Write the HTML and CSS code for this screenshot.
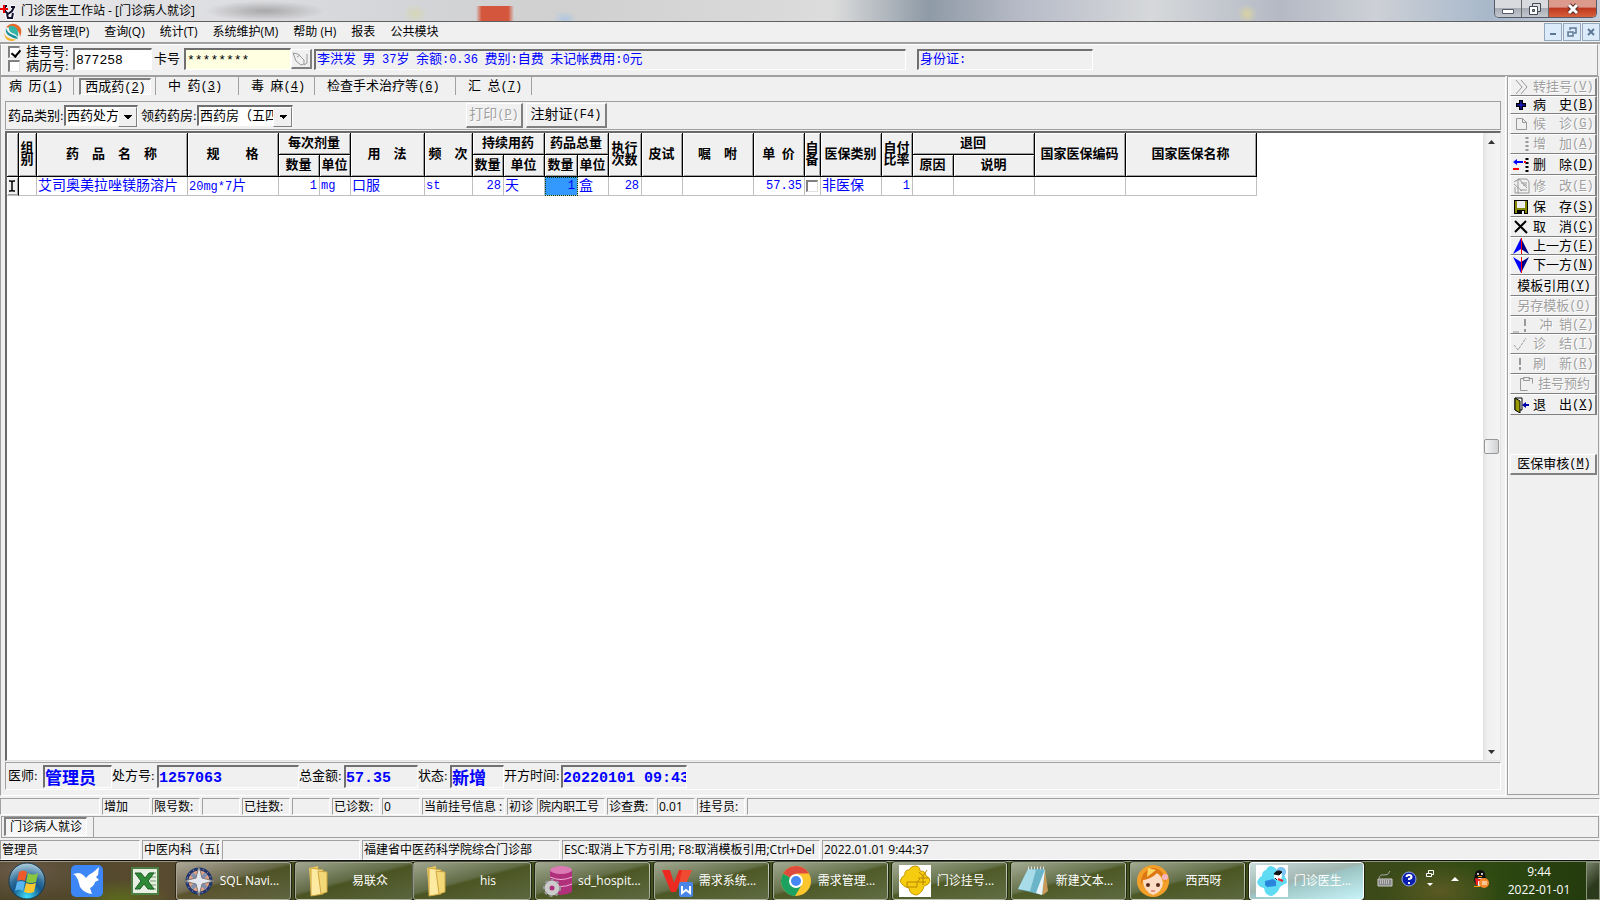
FILE: index.html
```html
<!DOCTYPE html>
<html lang="zh-CN">
<head>
    <meta charset="utf-8">
    <meta name="viewport" content="width=device-width, initial-scale=1">
    <title>门诊医生工作站</title>
    <link rel="stylesheet" href="styles.css">
</head>
<body>
    <header class="titlebar">
        <svg class="app-icon" width="17" height="18" viewBox="0 0 17 18">
            <path d="M5 4v5l3 3 4-3 2-4M7 12l1 4h4l1-5M5 4h2M11 5h4" fill="none" stroke="#fff" stroke-width="4"/>
            <path d="M5 4v5l3 3 4-3 2-4M7 12l1 4h4l1-5M5 4h2M11 5h4" fill="none" stroke="#101030" stroke-width="2"/>
            <path d="M0 7h8M4 3v8" stroke="#e00" stroke-width="2"/>
        </svg>
        <h1>门诊医生工作站 - [门诊病人就诊]</h1>
        <div class="window-buttons">
            <button aria-label="最小化"><svg width="14" height="14"><path d="M1.500 7.500h11v4h-11z" fill="#fff" stroke="#555a6a"/></svg></button>
            <button aria-label="还原"><svg width="14" height="14"><path d="M4.500 1.500h8v8h-8z" fill="#ddd" stroke="#444a5a"/><path d="M1.500 4.500h8v8h-8z" fill="#fff" stroke="#444a5a"/><path d="M4.500 7.500h2v2h-2z" fill="#999" stroke="#444a5a"/></svg></button>
            <button class="close" aria-label="关闭"><svg width="14" height="14"><path d="M3 3l8 8M11 3l-8 8" stroke="#5a2a2a" stroke-width="5"/><path d="M3 3l8 8M11 3l-8 8" stroke="#fff" stroke-width="3"/></svg></button>
        </div>
    </header>

    <nav class="menubar">
        <svg class="menu-logo" width="18" height="18" viewBox="0 0 18 18">
            <path d="M2 4q6-6 13-1 4 4 1 11 0-6-6-8-4-1-8-2z" fill="#e8672a"/>
            <path d="M2 5q1 5 7 7 4 1 5 4-6-1-10-4-3-3-2-7z" fill="#108f98"/>
            <path d="M5 3q5-1 8 3 2 4 1 8-2-3-6-4-4-2-3-7z" fill="#35b5a5"/>
            <path d="M0 8q0 5 5 7 4 2 7 1-1 2-4 2-5 0-7-4-1-3-1-6z" fill="#f5b32b"/>
        </svg>
        <button>业务管理(P)</button>
        <button>查询(Q)</button>
        <button>统计(T)</button>
        <button>系统维护(M)</button>
        <button>帮助 (H)</button>
        <button>报表</button>
        <button>公共模块</button>
        <div class="mdi-buttons">
            <button aria-label="最小化子窗口"><svg width="10" height="10"><path d="M2 7h6" stroke="#5d7896" stroke-width="2"/></svg></button>
            <button aria-label="还原子窗口"><svg width="10" height="10"><path d="M3 3V1h6v5H7M1 5h5v4H1z" fill="none" stroke="#5d7896" stroke-width="1.500"/></svg></button>
            <button aria-label="关闭子窗口"><svg width="10" height="10"><path d="M2 2l6 6M8 2l-6 6" stroke="#5d7896" stroke-width="2"/></svg></button>
        </div>
    </nav>

    <section class="patient">
        <div class="checks">
            <label><input type="checkbox" checked>挂号号:</label>
            <label><input type="checkbox">病历号:</label>
        </div>
        <input class="field reg-no" type="text" value="877258" aria-label="挂号号">
        <label class="card-label" for="card">卡号</label>
        <input class="field card-no" id="card" type="text" value="********">
        <button class="btn card-btn" aria-label="读卡" disabled><svg width="18" height="16"><path d="M1 2l5 1 6 6v4l-3 1-5-4zM5 6l3-2M15 3v9l-3 2" fill="none" stroke="#999"/></svg></button>
        <div class="sunken info">李洪发&ensp;男&ensp;<span class="num">37</span>岁&ensp;余额<span class="num">:0.36</span>&ensp;费别<span class="num">:</span>自费&ensp;未记帐费用<span class="num">:0</span>元</div>
        <div class="sunken idcard">身份证<span class="num">:</span></div>
    </section>

    <main>
        <div class="work">
            <div class="tabs">
                <button>病&ensp;历<span class="key">(<u>1</u>)</span></button>
                <button class="active"><span class="pressed">西成药<span class="key">(<u>2</u>)</span></span></button>
                <button>中&ensp;药<span class="key">(<u>3</u>)</span></button>
                <button>毒&ensp;麻<span class="key">(<u>4</u>)</span></button>
                <button>检查手术治疗等<span class="key">(<u>6</u>)</span></button>
                <button>汇&ensp;总<span class="key">(<u>7</u>)</span></button>
            </div>

            <div class="toolbar">
                <label for="kind">药品类别:</label>
                <span class="drop kind"><select id="kind"><option>西药处方</option></select></span>
                <label for="pharmacy">领药药房:</label>
                <span class="drop pharmacy"><select id="pharmacy"><option>西药房（五四）</option></select></span>
                <button class="btn print" disabled>打印<span class="key">(<u>P</u>)</span></button>
                <button class="btn inject">注射证<span class="key">(F4)</span></button>
            </div>

            <div class="grid">
                <div class="grid-body">
                    <table>
                        <colgroup>
                            <col class="w12"><col class="w18"><col class="w151"><col class="w91">
                            <col class="w41"><col class="w31"><col class="w74"><col class="w48">
                            <col class="w31"><col class="w41"><col class="w33"><col class="w31">
                            <col class="w33"><col class="w41"><col class="w71"><col class="w51">
                            <col class="w16"><col class="w61"><col class="w31"><col class="w41">
                            <col class="w81"><col class="w91"><col class="w131">
                        </colgroup>
                        <thead>
                            <tr>
                                <th rowspan="2"></th>
                                <th rowspan="2" class="stack">组别</th>
                                <th rowspan="2">药&emsp;品&emsp;名&emsp;称</th>
                                <th rowspan="2">规&emsp;&emsp;格</th>
                                <th colspan="2">每次剂量</th>
                                <th rowspan="2">用&emsp;法</th>
                                <th rowspan="2">频&emsp;次</th>
                                <th colspan="2">持续用药</th>
                                <th colspan="2">药品总量</th>
                                <th rowspan="2" class="stack">执行<br>次数</th>
                                <th rowspan="2">皮试</th>
                                <th rowspan="2">嘱&emsp;咐</th>
                                <th rowspan="2">单&ensp;价</th>
                                <th rowspan="2" class="stack">自备</th>
                                <th rowspan="2">医保类别</th>
                                <th rowspan="2" class="stack">自付<br>比率</th>
                                <th colspan="2">退回</th>
                                <th rowspan="2">国家医保编码</th>
                                <th rowspan="2">国家医保名称</th>
                            </tr>
                            <tr>
                                <th>数量</th><th>单位</th>
                                <th>数量</th><th>单位</th>
                                <th>数量</th><th>单位</th>
                                <th>原因</th><th>说明</th>
                            </tr>
                        </thead>
                        <tbody>
                            <tr>
                                <td class="marker"><svg width="8" height="12"><path d="M1 1h2l1 1 1-1h2M4 2v8M1 11h2l1-1 1 1h2" fill="none" stroke="#000" stroke-width="1.500"/></svg></td>
                                <td></td>
                                <td>艾司奥美拉唑镁肠溶片</td>
                                <td><span class="num">20mg*7</span>片</td>
                                <td class="num right">1</td>
                                <td class="num">mg</td>
                                <td>口服</td>
                                <td class="num">st</td>
                                <td class="num right">28</td>
                                <td>天</td>
                                <td class="num right selected">1</td>
                                <td>盒</td>
                                <td class="num right">28</td>
                                <td></td>
                                <td></td>
                                <td class="num right">57.35</td>
                                <td class="tick"><input type="checkbox" aria-label="自备"></td>
                                <td>非医保</td>
                                <td class="num right">1</td>
                                <td></td>
                                <td></td>
                                <td></td>
                                <td></td>
                            </tr>
                        </tbody>
                    </table>
                </div>
                <div class="scrollbar">
                    <button aria-label="向上滚动"><svg width="7" height="4"><path d="M0 4l3.500-4L7 4z" fill="#333"/></svg></button>
                    <div class="thumb"></div>
                    <button aria-label="向下滚动"><svg width="7" height="4"><path d="M0 0h7L3.500 4z" fill="#333"/></svg></button>
                </div>
            </div>

            <div class="summary">
                <label for="doctor">医师:</label>
                <input class="sunken" id="doctor" value="管理员" readonly>
                <label for="rx">处方号:</label>
                <input class="sunken mono" id="rx" value="1257063" readonly>
                <label for="total">总金额:</label>
                <input class="sunken mono" id="total" value="57.35" readonly>
                <label for="state">状态:</label>
                <input class="sunken" id="state" value="新增" readonly>
                <label for="time">开方时间:</label>
                <input class="sunken mono" id="time" value="20220101 09:43:31" readonly>
            </div>
        </div>

        <aside class="actions">
            <button class="btn short" disabled><svg width="18" height="16"><path d="M3 1l6 7-6 7M8 1l6 7-6 7" fill="none" stroke="#999"/></svg><span>转挂号</span><span class="key">(<u>V</u>)</span></button>
            <button class="btn short"><svg width="18" height="16"><path d="M8 3v10M3 8h10" stroke="#000" stroke-width="4"/><path d="M8 4v8M4 8h8" stroke="#22f" stroke-width="1"/></svg><span>病&emsp;史</span><span class="key">(<u>B</u>)</span></button>
            <button class="btn" disabled><svg width="18" height="16"><path d="M3.500 2.500h6l4 4v7h-10zM9.500 2.500v4h4" fill="none" stroke="#999"/></svg><span>候&emsp;诊</span><span class="key">(<u>G</u>)</span></button>
            <button class="btn" disabled><svg width="18" height="16"><path d="M14 1v15" stroke="#999" stroke-width="3" stroke-dasharray="2 2"/></svg><span>增&emsp;加</span><span class="key">(<u>A</u>)</span></button>
            <button class="btn tall"><svg width="18" height="16"><path d="M14 1v15" stroke="#000" stroke-width="3" stroke-dasharray="2 2"/><path d="M0 5l4-3v2h6v2H4v2z" fill="#00f"/><path d="M0 11h6v2H0zM11 4h2v2h-2z" fill="#f00"/></svg><span>删&emsp;除</span><span class="key">(<u>D</u>)</span></button>
            <button class="btn tall" disabled><svg width="18" height="16"><path d="M5 1h9l2 3v11H5zM1 4l5-3 8 9M1 6l8 7M2 9v6h4M8 5h6M10 7h4M7 12h7" fill="none" stroke="#999"/></svg><span>修&emsp;改</span><span class="key">(<u>E</u>)</span></button>
            <button class="btn tall"><svg width="18" height="16"><path d="M1 1h14v14H1z" fill="#000"/><path d="M2 2h2v12H2zM12 2h2v12h-2zM4 9h8v2H4z" fill="#880"/><path d="M4 2h8v7H4z" fill="#eee"/><path d="M9 12h2v3H9z" fill="#eee"/></svg><span>保&emsp;存</span><span class="key">(<u>S</u>)</span></button>
            <button class="btn"><svg width="18" height="16"><path d="M2 2l12 12M13 2L2 13" stroke="#000" stroke-width="2"/></svg><span>取&emsp;消</span><span class="key">(<u>C</u>)</span></button>
            <button class="btn short"><svg width="18" height="16"><path d="M8 0L0 16l8-5z" fill="#00f"/><path d="M8 0l8 16-8-5z" fill="#008"/><path d="M8.500 0v16" stroke="#f00"/></svg><span>上一方</span><span class="key">(<u>F</u>)</span></button>
            <button class="btn"><svg width="18" height="16"><path d="M8 16L0 0l8 5z" fill="#00f"/><path d="M8 16l8-16-8 5z" fill="#008"/><path d="M8.500 0v16" stroke="#f00"/></svg><span>下一方</span><span class="key">(<u>N</u>)</span></button>
            <button class="btn tall center"><span>模板引用</span><span class="key">(<u>Y</u>)</span></button>
            <button class="btn center" disabled><span>另存模板</span><span class="key">(<u>O</u>)</span></button>
            <button class="btn short" disabled><svg width="18" height="16"><path d="M12 2v7M12 12v3" stroke="#999" stroke-width="2"/><path d="M0 15h6" stroke="#999"/></svg><span>&ensp;冲&ensp;销</span><span class="key">(<u>Z</u>)</span></button>
            <button class="btn" disabled><svg width="18" height="16"><path d="M1 9l4 5 8-12" fill="none" stroke="#999" stroke-dasharray="3 1"/></svg><span>诊&emsp;结</span><span class="key">(<u>T</u>)</span></button>
            <button class="btn" disabled><svg width="18" height="16"><path d="M7 2v7M7 11v3" stroke="#999" stroke-width="2"/></svg><span>刷&emsp;新</span><span class="key">(<u>R</u>)</span></button>
            <button class="btn center" disabled><svg width="18" height="16"><path d="M6.500 2.500h-4v12h7M10.500 2.500h4v5M5.500 1.500h6v3h-6z" fill="none" stroke="#999"/></svg><span>挂号预约</span></button>
            <button class="btn tall"><svg width="18" height="16"><path d="M2 1h7v12H2z" fill="#fff" stroke="#000"/><path d="M2 1l5 3v12l-5-3z" fill="#990" stroke="#000"/><path d="M9 8l4-3v2h3v2h-3v2z" fill="#00a"/></svg><span>退&emsp;出</span><span class="key">(<u>X</u>)</span></button>
            <button class="btn tall center audit"><span>医保审核</span><span class="key">(<u>M</u>)</span></button>
        </aside>
    </main>

    <div class="status counts">
        <span></span><span>增加</span><span>限号数:</span><span></span><span>已挂数:</span><span></span>
        <span>已诊数:</span><span>0</span><span>当前挂号信息 :</span><span>初诊</span><span>院内职工号</span>
        <span>诊查费:</span><span>0.01</span><span>挂号员:</span><span></span>
    </div>

    <div class="doc-tabs">
        <button>门诊病人就诊</button>
    </div>

    <div class="status session">
        <span>管理员</span><span>中医内科（五四）</span><span></span><span>福建省中医药科学院综合门诊部</span>
        <span>ESC:取消上下方引用; F8:取消模板引用;Ctrl+Del</span><span>2022.01.01 9:44:37</span>
    </div>

    <footer class="taskbar">
        <button class="start" aria-label="开始">
            <svg width="38" height="38" viewBox="0 0 38 38">
                <defs>
                    <radialGradient id="orb" cx="50%" cy="95%" r="95%"><stop offset="0" stop-color="#3fe0ff"/><stop offset=".45" stop-color="#14598c"/><stop offset=".6" stop-color="#2c6c98"/><stop offset="1" stop-color="#b4d0e0"/></radialGradient>
                </defs>
                <circle cx="19" cy="19" r="18" fill="url(#orb)" stroke="#16384e"/>
                <path d="M11 10q4-3 8 0l-2 9q-4-2-8 0z" fill="#f0592a"/>
                <path d="M20 11q5 3 10 0l-2 9q-5 2-10 0z" fill="#8cc63e"/>
                <path d="M9 20q4-2 8 0l-2 9q-4-3-8 0z" fill="#5ab4f0"/>
                <path d="M18 21q5 2 10 0l-2 9q-5 2-10 0z" fill="#fdc82f"/>
            </svg>
        </button>
        <button class="pin bird" aria-label="飞鸟">
            <svg width="32" height="32"><rect width="32" height="32" rx="5" fill="#3d86f6"/><path d="M2 9l5-1q4 0 8 5 3-4 6-5 3-2 7-6l-1 8-2 2 3 3-4 2q-1 4-5 6l2 6q-8-1-12-7-1-4-2-7-2-5-5-6z" fill="#fff"/></svg>
        </button>
        <button class="pin" aria-label="Excel">
            <svg width="28" height="28"><path d="M1 1h26v26H1z" fill="#e8f0e4" stroke="#4b7d45" stroke-width="2"/><path d="M19 6h6M19 10h6M19 14h6M19 18h6M19 22h6" stroke="#6a9a60"/><path d="M4 6h6l4 5 4-5h5l-6 8 6 8h-6l-4-5-4 5H4l6-8z" fill="#2f8a38" stroke="#1c5e26"/></svg>
        </button>
        <div class="tasks">
            <button class="task">
                <svg width="32" height="32"><circle cx="16" cy="16" r="12" fill="#e8a080" stroke="#20366c" stroke-width="3"/><circle cx="16" cy="16" r="12" fill="none" stroke="#b0b8d0" stroke-width="1" stroke-dasharray="1 4"/><path d="M16 16l-7-7M16 16l7-7M16 16l-7 7M16 16l7 7" stroke="#8090b0" stroke-width="4"/><path d="M16 1l3 12 12 3-12 3-3 12-3-12-12-3 12-3z" fill="#e4e8ee" stroke="#777"/></svg>
                <span>SQL Navi...</span>
            </button>
            <span class="pair">
                <button class="task"><svg width="32" height="32"><path d="M7 3l9-2v26l-7 3z" fill="#e9c75e"/><path d="M9 3l12 2v24L9 31z" fill="#fbeaa0" stroke="#cfa640"/><path d="M16 6l9 1v20l-6 2z" fill="#f3d878" stroke="#cfa640"/></svg><span>易联众</span></button>
                <button class="task"><svg width="32" height="32"><path d="M7 3l9-2v26l-7 3z" fill="#e9c75e"/><path d="M9 3l12 2v24L9 31z" fill="#fbeaa0" stroke="#cfa640"/><path d="M16 6l9 1v20l-6 2z" fill="#f3d878" stroke="#cfa640"/></svg><span>his</span></button>
            </span>
            <button class="task">
                <svg width="32" height="32"><path d="M8 5v22q11 6 22 0V5z" fill="#b0307c"/><path d="M8 12q11 5 22 0M8 19q11 5 22 0" fill="none" stroke="#f0b0d8"/><ellipse cx="19" cy="5" rx="11" ry="4" fill="#dc7ab4"/><circle cx="10" cy="23" r="5" fill="none" stroke="#ccc" stroke-width="5"/><circle cx="10" cy="23" r="8" fill="none" stroke="#999" stroke-width="2" stroke-dasharray="3 3"/></svg>
                <span>sd_hospit...</span>
            </button>
            <button class="task">
                <svg width="32" height="32"><path d="M1 5h8l4 13 5-13h5l-8 22h-5z" fill="#ec2a22"/><path d="M21 5h10l-6 14h-7z" fill="#f04a30"/><rect x="18" y="17" width="14" height="15" rx="2" fill="#4a86e8"/><path d="M21 21v7l4-3 4 3v-7" fill="none" stroke="#fff" stroke-width="2"/></svg>
                <span>需求系统...</span>
            </button>
            <button class="task">
                <svg width="32" height="32"><circle cx="16" cy="16" r="15" fill="#fbc52d"/><path d="M16 16L3 8.500A15 15 0 0 1 29 8.500H16z" fill="#de4a3c"/><path d="M16 16L3 8.500A15 15 0 0 0 15 31l6-10z" fill="#1da160"/><circle cx="16" cy="16" r="7" fill="#fff"/><circle cx="16" cy="16" r="5" fill="#4587f3"/></svg>
                <span>需求管理...</span>
            </button>
            <button class="task">
                <svg width="32" height="32"><path d="M0 0h32v32H0z" fill="#fff"/><path d="M16 1q5 0 5 5 6 0 6 5 4 1 4 5-1 4-6 5-1 6-7 9-7 0-8-7-6-1-9-7 2-5 5-6-1-5 4-5 2-4 6-4z" fill="#f5cc10" stroke="#c99a00"/><path d="M8 17h10l3-3M8 17v5h10v-5M20 7l4 4 4-6M19 13h10M19 17h8M24 11v9" fill="none" stroke="#b88400" stroke-width="1"/></svg>
                <span>门诊挂号...</span>
            </button>
            <button class="task">
                <svg width="32" height="32"><path d="M9 4h18l3 22-5 4z" fill="#c79a5a"/><path d="M10 4h17l-3 26-24-6z" fill="#6cb4c8"/><path d="M10 4l8 1-6 21-12-2z" fill="#a8dce8"/><path d="M27 4l-3 26-6-2z" fill="#e8f4f8"/><path d="M10 3h18" stroke="#ddd" stroke-width="3" stroke-dasharray="1 2"/></svg>
                <span>新建文本...</span>
            </button>
            <button class="task">
                <svg width="32" height="32"><circle cx="16" cy="16" r="16" fill="#f2a02a"/><path d="M6 15q10-3 14-7 5 4 6 10-1 9-10 12Q6 26 6 15z" fill="#fbdcc4"/><path d="M4 20Q3 7 15 3q12 0 14 15-4-8-9-10-6 6-14 7z" fill="#dd7714"/><path d="M11 3l8 2-9 7z" fill="#ffd764"/><circle cx="11" cy="20" r="2" fill="#5a2b1d"/><circle cx="21" cy="20" r="2" fill="#5a2b1d"/><path d="M14 26h4" stroke="#d44"/><circle cx="28" cy="12" r="3" fill="#f4b4c0"/></svg>
                <span>西西呀</span>
            </button>
            <button class="task current">
                <svg width="32" height="32"><path d="M0 0h32v32H0z" fill="#fff"/><path d="M15 1q5 1 6 5 6 0 7 4 3 4 3 8-5 2-7 4-2 6-8 9-7 0-8-8-6-1-7-6 2-5 5-6 0-5 4-6 2-4 5-4z" fill="#5fdcf4"/><circle cx="25" cy="7" r="5" fill="#7cc4f4"/><circle cx="22" cy="11" r="4" fill="#fff"/><path d="M18 9q3-5 8-2l-3 3zM19 13l2 2" fill="#111" stroke="#111"/><path d="M22 14l5 2" stroke="#e22" stroke-width="2"/><path d="M9 16l8-2 3 2v5l-9 1-2-2z" fill="#2a86dc"/></svg>
                <span>门诊医生...</span>
            </button>
        </div>
        <div class="tray">
            <svg width="16" height="16"><path d="M1 8h14v7H1z" fill="#888" stroke="#ccc"/><path d="M3 10h10M3 12h10" stroke="#eee" stroke-dasharray="1 1"/><path d="M2 7q1-4 5-3t6-4" fill="none" stroke="#aaa"/></svg>
            <svg width="16" height="16"><circle cx="8" cy="8" r="7" fill="#0a1fb0" stroke="#9aa8e0"/><path d="M5.500 6q0-2 2.500-2t2.500 2Q10.500 7.500 8 8v1M8 11v2" fill="none" stroke="#fff" stroke-width="2"/></svg>
            <svg width="10" height="20"><path d="M3.500 4V1.500h5v4H7M1.500 4.500h5v3h-5z" fill="none" stroke="#fff"/><path d="M2 14h6l-3 3z" fill="#fff"/></svg>
            <svg class="up" width="8" height="5"><path d="M0 5l4-4 4 4z" fill="#fff"/></svg>
            <svg width="16" height="18"><ellipse cx="7" cy="9" rx="6" ry="7" fill="#111"/><ellipse cx="7" cy="4" rx="5" ry="4" fill="#111"/><ellipse cx="7" cy="12" rx="4" ry="4" fill="#fff"/><path d="M2 8q5 2 10 0v2q-5 2-7 1v4H3z" fill="#e22"/><circle cx="5" cy="4" r="1" fill="#fff"/><circle cx="9" cy="4" r="1" fill="#fff"/><path d="M5 6h4v1H5zM1 16h6v1H1z" fill="#f90"/><circle cx="11" cy="13" r="5" fill="#f58a2c"/><path d="M9 12h5M9 14h5" stroke="#fff"/></svg>
        </div>
        <div class="clock"><span>9:44</span><span>2022-01-01</span></div>
        <button class="desktop" aria-label="显示桌面"></button>
    </footer>
</body>
</html>
```
FILE: styles.css
```css
* {
    box-sizing: border-box;
}
body {
    margin: 0;
    height: 100vh;
    display: flex;
    flex-direction: column;
    overflow: hidden;
    background: #f0f0f0;
    color: #000;
    font-family: "Liberation Serif", "Noto Sans CJK SC", serif;
    font-size: 13px;
    line-height: 16px;
    white-space: nowrap;
}
button, input, select {
    margin: 0;
    padding: 0;
    border: 0;
    border-radius: 0;
    background: none;
    color: inherit;
    font: inherit;
    white-space: nowrap;
}
svg {
    display: block;
    flex: none;
}
.key, .num {
    font-family: "Liberation Mono", "Noto Sans CJK SC", monospace;
    font-size: 12px;
}

/* title and menu */
.titlebar, .menubar, .status, .doc-tabs, .taskbar {
    font-family: "Open Sans", "Noto Sans CJK SC", sans-serif;
    font-size: 12px;
}
.titlebar {
    flex: none;
    height: 22px;
    display: flex;
    align-items: center;
    border-bottom: 1px solid #606060;
    background:
        linear-gradient(90deg, transparent, #d4563c 15%, #d4563c 85%, transparent) 476px 6px / 38px 16px no-repeat,
        radial-gradient(ellipse 60px 10px at 265px 11px, #a8a8aa, transparent),
        radial-gradient(ellipse 12px 8px at 565px 19px, #b0c8e0, transparent),
        radial-gradient(ellipse 12px 10px at 415px 14px, #d6d6b8, transparent),
        radial-gradient(ellipse 10px 10px at 1247px 14px, #d8d2a4, transparent),
        linear-gradient(90deg, #e9e9ec 0, #d4d5d8 25%, #d0d0d0 35%, #dcdcdc 52%, #8e9aa6 58%, #b8bcc8 64%, #d6d8da 72%, #b4b9c4 80%, #cdd0d6 86%, #a8b8ca 93%, #c5ced8);
}
.titlebar h1 {
    margin: 0 auto 0 4px;
    font-size: 12px;
    font-weight: normal;
}
.window-buttons {
    align-self: flex-start;
    display: flex;
    height: 18px;
    margin-right: 3px;
    border: 1px solid #555a66;
    border-top: 0;
    border-radius: 0 0 5px 5px;
    overflow: hidden;
}
.window-buttons button {
    width: 27px;
    display: flex;
    justify-content: center;
    align-items: center;
    border-right: 1px solid #666;
    background: linear-gradient(#d8dade 45%, #a8adb6 50%, #c4c8ce);
}
.window-buttons .close {
    width: 47px;
    border: 0;
    background: linear-gradient(#dc9a8c 40%, #bf3a20 50%, #d8603c);
}
.menubar {
    flex: none;
    height: 22px;
    display: flex;
    align-items: center;
    gap: 15px;
    padding: 0 0 1px 4px;
    border-bottom: 2px solid #a0a0a0;
}
.menu-logo {
    margin-right: -10px;
}
.mdi-buttons {
    display: flex;
    gap: 1px;
    margin-left: auto;
}
.mdi-buttons button {
    width: 18px;
    height: 18px;
    display: flex;
    justify-content: center;
    align-items: center;
    border: 1px solid #94a8bd;
    background: #dcebfa;
}

/* shared win32 look */
.sunken, .field {
    border: 1px solid #fff;
    border-top: 2px solid #707070;
    border-left: 2px solid #707070;
}
.field {
    background: #fff;
}
.btn {
    display: flex;
    align-items: center;
    border: 1px solid #fff;
    border-right: 2px solid #808080;
    border-bottom: 2px solid #808080;
    background: #f0f0f0;
}
.btn:disabled {
    color: #a0a0a0;
    text-shadow: 1px 1px #fff;
}

/* patient bar */
.patient {
    flex: none;
    height: 32px;
    display: flex;
    align-items: center;
    margin: 0 2px 0 0;
    padding: 0 0 2px 7px;
    border: 1px solid #a0a0a0;
    border-top-color: #fff;
    box-shadow: 0 1px #fff, inset 1px 0 #fff;
}
.checks {
    display: flex;
    flex-direction: column;
    width: 65px;
}
.checks label {
    display: flex;
    align-items: center;
    gap: 6px;
    height: 14px;
}
input[type="checkbox"] {
    appearance: none;
    width: 12px;
    height: 12px;
    border: 1px solid #e0e0e0;
    border-top: 2px solid #808080;
    border-left: 2px solid #808080;
    background: #fff;
}
input[type="checkbox"]:checked::after {
    content: "";
    display: block;
    width: 4px;
    height: 7px;
    margin-left: 3px;
    border: solid #000;
    border-width: 0 2px 2px 0;
    transform: rotate(40deg);
}
.field {
    height: 22px;
    padding: 2px 0 0 1px;
    font-family: "Liberation Mono", monospace;
}
.reg-no {
    width: 79px;
}
.card-label {
    padding: 0 4px 0 2px;
}
.card-no {
    width: 107px;
    background: #ffffe1;
}
.card-btn {
    width: 21px;
    height: 20px;
}
.info, .idcard {
    height: 21px;
    padding-left: 1px;
    color: #00f;
}
.info {
    width: 592px;
    margin: 0 11px 0 2px;
}
.idcard {
    width: 176px;
}

/* work area */
main {
    flex: 1;
    min-height: 0;
    display: flex;
    margin-bottom: 2px;
}
.work {
    flex: 1;
    min-width: 0;
    display: flex;
    flex-direction: column;
    padding: 0 4px 5px 4px;
    border: 1px solid #a0a0a0;
    border-right: 1px solid #fff;
    border-bottom: 1px solid #fff;
}
.tabs {
    flex: none;
    height: 24px;
    display: grid;
    grid-template-columns: 69px 82px 83px 76px 141px 76px;
}
.tabs button {
    height: 18px;
    padding-left: 12px;
    border-right: 1px solid #a0a0a0;
    text-align: left;
}
.tabs button:first-child {
    padding-left: 4px;
}
.tabs .active {
    padding: 0 4px 0 5px;
}
.pressed, .doc-tabs button {
    border: 1px solid #fff;
    border-top: 2px solid #808080;
    border-left: 2px solid #808080;
    background: repeating-conic-gradient(#fff 0 25%, #eee 0 50%) 0 0 / 2px 2px;
}
.pressed {
    display: block;
    height: 17px;
    line-height: 14px;
    text-align: center;
}
.toolbar {
    flex: none;
    height: 29px;
    display: flex;
    align-items: center;
    padding-left: 2px;
    border: 1px solid #a0a0a0;
}
.toolbar label {
    width: 56px;
}
.drop {
    position: relative;
    height: 21px;
    margin-right: 3px;
    border: 1px solid #fff;
    border-top: 2px solid #707070;
    border-left: 2px solid #707070;
    background: #fff;
}
.drop select {
    display: block;
    appearance: none;
    width: 100%;
    height: 100%;
    padding: 0 18px 0 1px;
    line-height: 16px;
}
.drop::after {
    content: "";
    position: absolute;
    top: 0;
    right: 0;
    width: 17px;
    height: 100%;
    border: 1px solid #fff;
    border-right-color: #808080;
    border-bottom-color: #808080;
    background:
        conic-gradient(from 315deg at 50% 100%, #000 90deg, transparent 0) center / 8px 4px no-repeat,
        #f0f0f0;
    pointer-events: none;
}
.kind {
    width: 74px;
}
.pharmacy {
    width: 96px;
    margin-right: 173px;
}
.toolbar .btn {
    height: 25px;
    justify-content: center;
    font-size: 14px;
}
.print {
    width: 57px;
    margin-right: 3px;
}
.inject {
    width: 81px;
}

/* prescription grid */
.grid {
    flex: 1;
    min-height: 0;
    display: flex;
    margin-top: 1px;
    border: 1px solid #e3e3e3;
    border-top: 2px solid #696969;
    border-left: 2px solid #696969;
}
.grid-body {
    flex: 1;
    background: #fff;
}
.scrollbar {
    width: 17px;
    display: flex;
    flex-direction: column;
    justify-content: space-between;
    background: linear-gradient(90deg, #e3e3e3, #f0f0f0 30%, #f4f4f4);
}
.scrollbar button {
    height: 17px;
    padding-left: 5px;
}
.thumb {
    width: 15px;
    height: 15px;
    margin-left: 1px;
    border: 1px solid #979797;
    border-radius: 2px;
    background: linear-gradient(90deg, #f5f5f5, #d0d2d4);
}
table {
    width: 1250px;
    table-layout: fixed;
    border-spacing: 0;
}
.w12 { width: 12px; }
.w16 { width: 16px; }
.w18 { width: 18px; }
.w31 { width: 31px; }
.w33 { width: 33px; }
.w41 { width: 41px; }
.w48 { width: 48px; }
.w51 { width: 51px; }
.w61 { width: 61px; }
.w71 { width: 71px; }
.w74 { width: 74px; }
.w81 { width: 81px; }
.w91 { width: 91px; }
.w131 { width: 131px; }
.w151 { width: 151px; }
th {
    height: 22px;
    padding: 0 1px 1px 0;
    border-right: 1px solid #000;
    border-bottom: 1px solid #000;
    background: #f0f0f0;
    box-shadow: inset 1px 1px #fff, inset -1px -1px #a0a0a0;
    line-height: 16px;
}
.stack {
    line-height: 12px;
    white-space: normal;
}
td {
    height: 19px;
    padding: 0 2px 0 1px;
    border-right: 1px solid #c0c0c0;
    border-bottom: 1px solid #c0c0c0;
    color: #00f;
    font-size: 14px;
    line-height: 16px;
    overflow: hidden;
}
td.num {
    font-size: 12px;
}
.right {
    text-align: right;
}
.marker {
    border-right-color: #000;
    background: #f0f0f0;
    box-shadow: inset 1px 1px #fff, inset -1px -1px #a0a0a0;
}
.selected {
    background: #3399ff;
    outline: 1px dotted #040;
    outline-offset: -1px;
}
.tick input {
    display: block;
}

/* prescription summary */
.summary {
    flex: none;
    height: 28px;
    display: grid;
    grid-template-columns: 35px 69px 45px 142px 45px 74px 32px 54px 57px 126px;
    align-items: center;
    margin-top: 1px;
    padding-left: 2px;
    border: 1px solid #fff;
    border-top-color: #a0a0a0;
    border-left-color: #a0a0a0;
}
.summary input {
    width: 100%;
    min-width: 0;
    height: 23px;
    color: #00f;
    font-size: 17px;
    font-weight: bold;
}
.summary .mono {
    padding-top: 3px;
    font-family: "Liberation Mono", monospace;
    font-size: 15px;
}

/* right hand buttons */
.actions {
    flex: none;
    width: 92px;
    display: flex;
    flex-direction: column;
    margin: 0 1px 1px 1px;
    padding: 1px 1px 1px 2px;
    border: 1px solid #a0a0a0;
    box-shadow: inset 1px 0 #fff;
}
.actions .btn {
    flex: none;
    height: 20px;
    padding-left: 2px;
    border-bottom-width: 1px;
}
.actions svg {
    margin-right: 2px;
}
.actions .short {
    height: 18px;
}
.actions .tall {
    height: 21px;
}
.actions .center {
    justify-content: center;
}
.actions .audit {
    margin-top: 39px;
    border-bottom-width: 2px;
}

/* status rows */
.status {
    flex: none;
    display: grid;
    gap: 2px;
}
.status span {
    padding-left: 1px;
    border: 1px solid #fff;
    border-top-color: #a0a0a0;
    border-left-color: #a0a0a0;
    overflow: hidden;
}
.counts {
    height: 17px;
    line-height: 15px;
    grid-template-columns: 100px 48px 48px 38px 48px 38px 48px 38px 83px 28px 68px 48px 38px 48px 1fr;
}
.session {
    height: 20px;
    line-height: 18px;
    grid-template-columns: 140px 78px 138px 198px 258px 1fr;
}
.doc-tabs {
    flex: none;
    height: 22px;
    display: flex;
    margin: 1px 1px 2px;
    padding-left: 2px;
    border: 1px solid #a0a0a0;
}
.doc-tabs::after {
    content: "";
    width: 6px;
    border-right: 1px solid #a0a0a0;
}
.doc-tabs button {
    width: 83px;
    height: 19px;
}

/* taskbar */
.taskbar {
    flex: none;
    height: 40px;
    display: flex;
    align-items: center;
    border-top: 1px solid #111;
    background:
        radial-gradient(ellipse 60px 30px at 1440px 30px, #5a5a22, transparent),
        radial-gradient(ellipse 80px 30px at 20px 10px, #6a5a48, transparent),
        radial-gradient(ellipse 50px 20px at 120px 38px, #5c6a1c, transparent),
        linear-gradient(90deg, #4c4428 0, #594b30 10%, #3e4a1c 20%, #475626 60%, #3c4a1a 86%, #2f4a12 93%, #22380c);
    box-shadow: inset 0 1px rgba(255, 255, 255, 0.4);
    color: #fff;
}
.start {
    margin-left: 8px;
}
.pin {
    margin-left: 28px;
}
.bird {
    margin-left: 25px;
}
.tasks {
    display: flex;
    gap: 4px;
    margin-left: 17px;
}
.pair {
    display: flex;
}
.task {
    width: 115px;
    height: 38px;
    display: flex;
    align-items: center;
    gap: 4px;
    padding-left: 6px;
    border: 1px solid rgba(255, 255, 255, 0.45);
    border-radius: 3px;
    outline: 1px solid rgba(0, 0, 0, 0.5);
    background: linear-gradient(165deg, rgba(255, 255, 255, 0.5), rgba(255, 255, 255, 0.18) 45%, rgba(110, 110, 50, 0.25) 50%, rgba(255, 255, 255, 0.15));
}
.pair .task {
    width: 118px;
}
.task span {
    flex: 1;
    padding-right: 10px;
    text-align: center;
}
.task.current {
    border-color: #fff;
    background: linear-gradient(165deg, #c8dedc, #a2b6b0 45%, #9cc4c4 50%, #c8f4f8);
}
.tray {
    display: flex;
    align-items: center;
    gap: 8px;
    margin-left: auto;
    padding-bottom: 4px;
}
.tray svg:last-child {
    margin-left: 6px;
}
.up {
    margin-left: 8px;
}
.clock {
    display: flex;
    flex-direction: column;
    width: 94px;
    margin-left: 3px;
    line-height: 18px;
    text-align: center;
}
.desktop {
    width: 14px;
    height: 38px;
    border: 1px solid #8a927c;
    background: linear-gradient(135deg, #76806a, #2c3a1c 60%);
}
```
